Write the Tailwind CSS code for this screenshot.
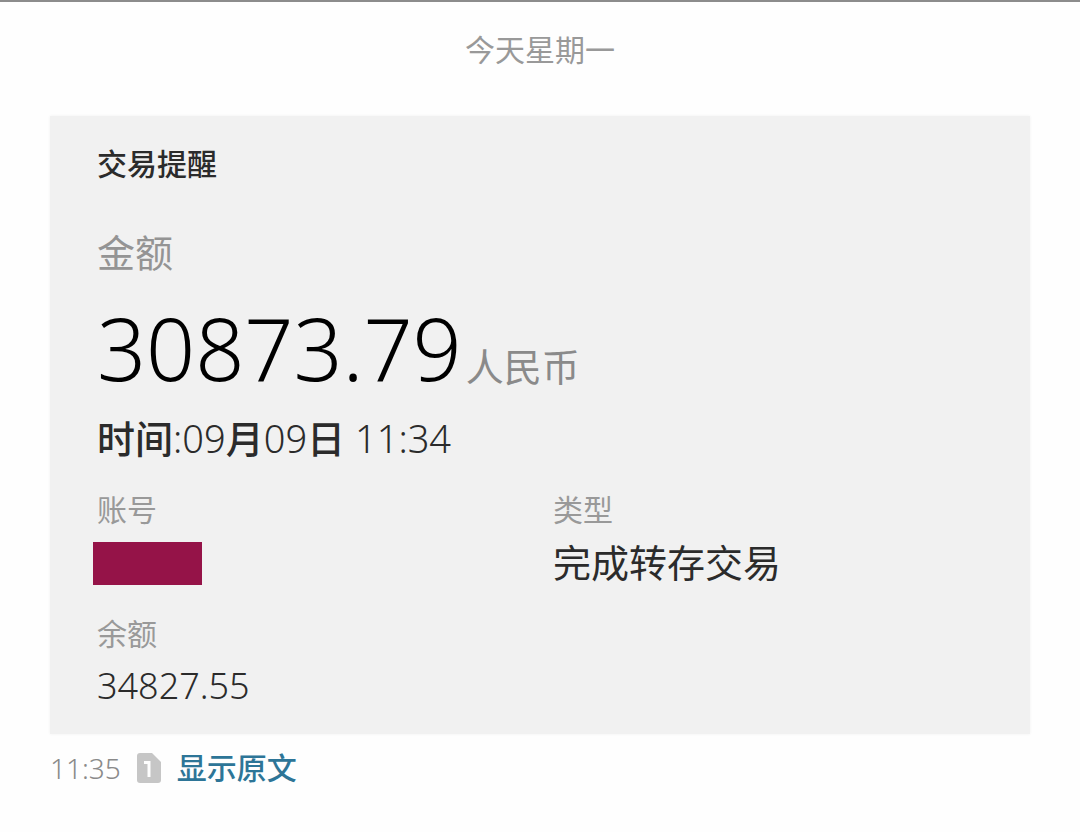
<!DOCTYPE html>
<html lang="zh-CN">
<head>
    <meta charset="UTF-8">
    <meta name="viewport" content="width=device-width, initial-scale=1.0">
    <title>交易提醒</title>
    <script src="https://cdn.jsdelivr.net/npm/@tailwindcss/browser@4"></script>
</head>
<body class="min-h-screen border-t-2 border-[#8c8c8c] bg-[#fefefe] font-['Noto_Sans','Noto_Sans_CJK_SC',sans-serif] text-[#2b2b2b]">

    <header class="pt-7 text-center text-[30px] leading-10 text-[#999999]">今天星期一</header>

    <main class="px-[50px] pt-[46px]">
        <!-- Transaction card -->
        <section class="bg-[#f1f1f1] px-[47px] pt-7 pb-6 shadow-[0_0_3px_#f1f1f1]">
            <h1 class="text-[30px] leading-10 font-medium">交易提醒</h1>

            <p class="mt-11 text-[38px] leading-12 text-[#949494]">金额</p>
            <p class="mt-7 flex items-baseline gap-1 leading-[88px]">
                <span class="text-[86px] font-light text-black">30873.79</span>
                <span class="text-[38px] text-[#8a8a8a]">人民币</span>
            </p>
            <p class="mt-1 text-[38px] leading-12 font-light"><span class="font-medium">时间</span>:09<span class="font-medium">月</span>09<span class="font-medium">日</span> 11:34</p>

            <dl class="mt-7 grid grid-cols-[456px_1fr] gap-y-7">
                <div>
                    <dt class="text-[30px] leading-10 text-[#999999]">账号</dt>
                    <dd class="mt-3 -ml-1 h-[43px] w-[109px] bg-[#951348]"></dd>
                </div>
                <div>
                    <dt class="text-[30px] leading-10 text-[#999999]">类型</dt>
                    <dd class="mt-2 text-[38px] leading-12">完成转存交易</dd>
                </div>
                <div>
                    <dt class="text-[30px] leading-10 text-[#999999]">余额</dt>
                    <dd class="mt-2 text-[36px] leading-12 font-light">34827.55</dd>
                </div>
            </dl>
        </section>

        <!-- Message status -->
        <footer class="mt-[10px] flex items-center text-[30px] leading-12">
            <time class="text-[28px] font-light text-[#8a8a8a]">11:35</time>
            <svg class="ml-4 h-8 w-6" viewBox="0 0 24 32" fill="none" role="img" aria-label="SIM 1">
                <path d="M3 1h12l9 9v18a3 3 0 0 1-3 3H3a3 3 0 0 1-3-3V4a3 3 0 0 1 3-3z" fill="#c6c6c6"/>
                <path d="M7 10.500h5V25" stroke="#fefefe" stroke-width="3"/>
            </svg>
            <a href="#" class="ml-4 font-medium text-[#2d7597]">显示原文</a>
        </footer>
    </main>

</body>
</html>
